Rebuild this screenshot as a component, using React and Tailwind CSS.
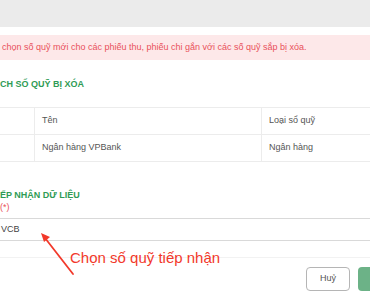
export default function App() {
  return (
    <div
      className="relative w-[370px] h-[300px] overflow-hidden bg-white text-[#555]"
      style={{ fontFamily: '"Liberation Sans", Arial, sans-serif' }}
    >
      {/* top grey bar */}
      <div className="h-[27px] bg-[#ebebeb]" />

      {/* warning */}
      <div className="mt-[8px] h-[25px] bg-[#fde8e9] flex items-center">
        <p className="ml-[2px] whitespace-nowrap text-[9px] text-[#e9505a]">
          chọn số quỹ mới cho các phiếu thu, phiếu chi gắn với các số quỹ sắp bị xóa.
        </p>
      </div>

      {/* deleted list */}
      <h3 className="mt-[18px] h-[12px] leading-[12px] whitespace-nowrap text-[9px] font-bold text-[#2f9b55]">
        CH SỐ QUỸ BỊ XÓA
      </h3>

      <div className="mt-[17px] border-y border-[#ececec] text-[9px]">
        <div className="grid grid-cols-[35px_227px_1fr] h-[27px] border-b border-[#ececec]">
          <div className="border-r border-[#ececec]" />
          <div className="border-r border-[#ececec] flex items-center pl-[7px]">Tên</div>
          <div className="flex items-center pl-[7px]">Loại sổ quỹ</div>
        </div>
        <div className="grid grid-cols-[35px_227px_1fr] h-[26px]">
          <div className="border-r border-[#ececec]" />
          <div className="border-r border-[#ececec] flex items-center pl-[7px]">Ngân hàng VPBank</div>
          <div className="flex items-center pl-[7px]">Ngân hàng</div>
        </div>
      </div>

      {/* receiving fund */}
      <h3 className="mt-[27px] h-[12px] leading-[12px] whitespace-nowrap text-[9px] font-bold text-[#2f9b55]">
        ẾP NHẬN DỮ LIỆU
      </h3>
      <div className="mt-[1px] h-[11px] leading-[11px] whitespace-nowrap text-[9px] text-[#e9505a]">
        (*)
      </div>
      <div className="mt-[5px] h-[23px] border-y border-[#d9d9d9] flex items-center text-[9px] text-[#444]">
        <span className="ml-[1px]">VCB</span>
      </div>

      {/* footer */}
      <div className="mt-[16px] border-t border-[#f2f2f2] flex justify-end gap-[8px] pt-[9px] mr-[-30px]">
        <button className="w-[44px] h-[24px] rounded-[4px] border border-[#b5b5b5] bg-white text-[9px] text-[#555]">
          Huỷ
        </button>
        <button className="w-[42px] h-[24px] rounded-[4px] bg-[#6cb287] text-[9px] text-white" />
      </div>

      {/* annotation */}
      <svg className="absolute left-0 top-0" width="370" height="300">
        <line x1="73" y1="274" x2="45" y2="238" stroke="#f2392b" strokeWidth="1.8" strokeLinecap="round" />
        <polygon points="41,233 50,237 44,242" fill="#f2392b" />
      </svg>
      <div className="absolute left-[70px] top-[248px] text-[15px] leading-[20px] text-[#f2392b] whitespace-nowrap">
        Chọn số quỹ tiếp nhận
      </div>
    </div>
  );
}
